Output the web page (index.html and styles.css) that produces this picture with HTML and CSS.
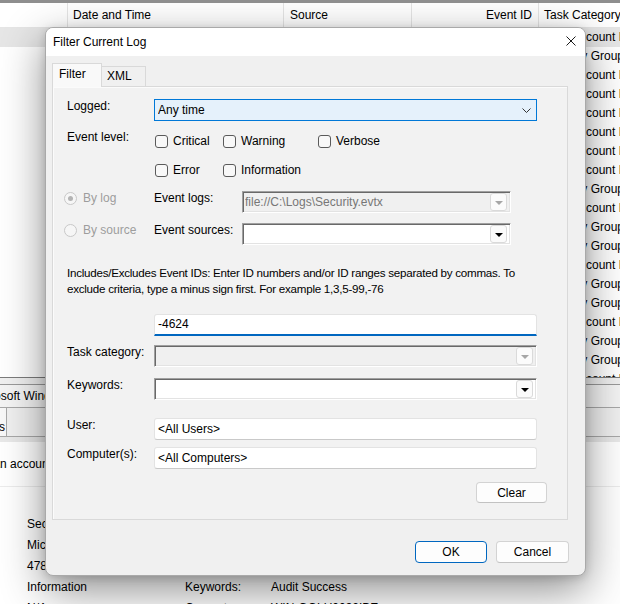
FILE: index.html
```html
<!DOCTYPE html>
<html lang="en">
<head>
<meta charset="utf-8">
<title>Filter Current Log</title>
<link rel="stylesheet" href="styles.css">
</head>
<body>
<div class="viewer">
  <div class="list-head">
    <div class="cell w-level"></div>
    <div class="cell w-date">Date and Time</div>
    <div class="cell w-source">Source</div>
    <div class="cell w-id">Event ID</div>
    <div class="cell w-task">Task Category</div>
  </div>
  <div class="list">
    <div class="row selected"><div class="w-level"></div><div class="w-date">3/14/2024 9:12:05 AM</div><div class="w-source">Microsoft Windows security</div><div class="w-id">4738</div><div class="w-task">User Account Management</div></div>
    <div class="row"><div class="w-level"></div><div class="w-date">3/14/2024 9:12:05 AM</div><div class="w-source">Microsoft Windows security</div><div class="w-id">4799</div><div class="w-task">Security Group Management</div></div>
    <div class="row"><div class="w-level"></div><div class="w-date">3/14/2024 9:12:04 AM</div><div class="w-source">Microsoft Windows security</div><div class="w-id">4738</div><div class="w-task">User Account Management</div></div>
    <div class="row"><div class="w-level"></div><div class="w-date">3/14/2024 9:12:04 AM</div><div class="w-source">Microsoft Windows security</div><div class="w-id">4722</div><div class="w-task">User Account Management</div></div>
    <div class="row"><div class="w-level"></div><div class="w-date">3/14/2024 9:12:04 AM</div><div class="w-source">Microsoft Windows security</div><div class="w-id">4738</div><div class="w-task">User Account Management</div></div>
    <div class="row"><div class="w-level"></div><div class="w-date">3/14/2024 9:12:04 AM</div><div class="w-source">Microsoft Windows security</div><div class="w-id">4724</div><div class="w-task">User Account Management</div></div>
    <div class="row"><div class="w-level"></div><div class="w-date">3/14/2024 9:12:04 AM</div><div class="w-source">Microsoft Windows security</div><div class="w-id">4738</div><div class="w-task">User Account Management</div></div>
    <div class="row"><div class="w-level"></div><div class="w-date">3/14/2024 9:12:04 AM</div><div class="w-source">Microsoft Windows security</div><div class="w-id">4720</div><div class="w-task">User Account Management</div></div>
    <div class="row"><div class="w-level"></div><div class="w-date">3/14/2024 9:12:03 AM</div><div class="w-source">Microsoft Windows security</div><div class="w-id">4732</div><div class="w-task">Security Group Management</div></div>
    <div class="row"><div class="w-level"></div><div class="w-date">3/14/2024 9:12:03 AM</div><div class="w-source">Microsoft Windows security</div><div class="w-id">4781</div><div class="w-task">User Account Management</div></div>
    <div class="row"><div class="w-level"></div><div class="w-date">3/14/2024 9:12:03 AM</div><div class="w-source">Microsoft Windows security</div><div class="w-id">4798</div><div class="w-task">Security Group Management</div></div>
    <div class="row"><div class="w-level"></div><div class="w-date">3/14/2024 9:12:03 AM</div><div class="w-source">Microsoft Windows security</div><div class="w-id">4799</div><div class="w-task">Security Group Management</div></div>
    <div class="row"><div class="w-level"></div><div class="w-date">3/14/2024 9:12:02 AM</div><div class="w-source">Microsoft Windows security</div><div class="w-id">4738</div><div class="w-task">User Account Management</div></div>
    <div class="row"><div class="w-level"></div><div class="w-date">3/14/2024 9:12:02 AM</div><div class="w-source">Microsoft Windows security</div><div class="w-id">4732</div><div class="w-task">Security Group Management</div></div>
    <div class="row"><div class="w-level"></div><div class="w-date">3/14/2024 9:12:02 AM</div><div class="w-source">Microsoft Windows security</div><div class="w-id">4799</div><div class="w-task">Security Group Management</div></div>
    <div class="row"><div class="w-level"></div><div class="w-date">3/14/2024 9:12:02 AM</div><div class="w-source">Microsoft Windows security</div><div class="w-id">4720</div><div class="w-task">User Account Management</div></div>
    <div class="row"><div class="w-level"></div><div class="w-date">3/14/2024 9:12:01 AM</div><div class="w-source">Microsoft Windows security</div><div class="w-id">4798</div><div class="w-task">Security Group Management</div></div>
    <div class="row"><div class="w-level"></div><div class="w-date">3/14/2024 9:12:01 AM</div><div class="w-source">Microsoft Windows security</div><div class="w-id">4799</div><div class="w-task">Security Group Management</div></div>
    <div class="row"><div class="w-level"></div><div class="w-date">3/14/2024 9:12:01 AM</div><div class="w-source">Microsoft Windows security</div><div class="w-id">4738</div><div class="w-task">User Account Management</div></div>
  </div>
  <div class="details">
    <div class="details-title"><span class="shift-title">Event 4781, Microsoft Windows security auditing.</span></div>
    <div class="details-tabs"><span class="dtab">Details</span></div>
    <div class="details-desc"><span class="shift-desc">An account was successfully logged on.</span></div>
    <div class="fields">
      <span>Security</span><span>Logged:</span><span>3/14/2024 9:12:05 AM</span>
      <span>Microsoft Windows security auditing.</span><span>Task Category:</span><span>User Account Management</span>
      <span>4781</span><span>Level:</span><span>Information</span>
      <span>Information</span><span>Keywords:</span><span>Audit Success</span>
      <span>N/A</span><span>Computer:</span><span>WIN-GOLU0032IBE</span>
    </div>
  </div>

  <div class="dialog">
    <div class="titlebar">
      <span class="title">Filter Current Log</span>
      <svg class="close" width="10" height="10" viewBox="0 0 10 10"><path d="M0.5 0.5L9.5 9.5M9.5 0.5L0.5 9.5" stroke="#1a1a1a" stroke-width="1" fill="none"/></svg>
    </div>
    <div class="dlg-body">
      <div class="tabs">
        <div class="tab active">Filter</div>
        <div class="tab">XML</div>
      </div>
      <div class="panel">
        <div class="frow r-logged">
          <div class="flabel">Logged:</div>
          <div class="select">
            <span class="val">Any time</span>
            <svg class="chev" width="9" height="5" viewBox="0 0 9 5"><path d="M0.5 0.5L4.5 4.5L8.5 0.5" stroke="#333" stroke-width="1" fill="none"/></svg>
          </div>
        </div>
        <div class="frow r-level">
          <div class="flabel">Event level:</div>
          <div class="checks">
            <div class="check w1"><span class="box"></span>Critical</div>
            <div class="check w2"><span class="box"></span>Warning</div>
            <div class="check"><span class="box"></span>Verbose</div>
          </div>
        </div>
        <div class="frow r-level2">
          <div class="flabel"></div>
          <div class="checks">
            <div class="check w1"><span class="box"></span>Error</div>
            <div class="check w2"><span class="box"></span>Information</div>
          </div>
        </div>
        <div class="frow r-log">
          <div class="radio on"><span class="dot"></span>By log</div>
          <div class="flabel2">Event logs:</div>
          <div class="combo off">
            <span class="val">file://C:\Logs\Security.evtx</span>
            <span class="drop"><i></i></span>
          </div>
        </div>
        <div class="frow r-src">
          <div class="radio"><span class="dot"></span>By source</div>
          <div class="flabel2">Event sources:</div>
          <div class="combo">
            <span class="val"></span>
            <span class="drop"><i></i></span>
          </div>
        </div>
        <p class="hint">Includes/Excludes Event IDs: Enter ID numbers and/or ID ranges separated by commas. To<br>exclude criteria, type a minus sign first. For example 1,3,5-99,-76</p>
        <div class="frow r-ids">
          <div class="flabel"></div>
          <div class="text focus">-4624</div>
        </div>
        <div class="frow r-task">
          <div class="flabel">Task category:</div>
          <div class="combo wide off">
            <span class="val"></span>
            <span class="drop"><i></i></span>
          </div>
        </div>
        <div class="frow r-kw">
          <div class="flabel">Keywords:</div>
          <div class="combo wide">
            <span class="val"></span>
            <span class="drop"><i></i></span>
          </div>
        </div>
        <div class="frow r-user">
          <div class="flabel">User:</div>
          <div class="text">&lt;All Users&gt;</div>
        </div>
        <div class="frow r-comp">
          <div class="flabel">Computer(s):</div>
          <div class="text">&lt;All Computers&gt;</div>
        </div>
        <div class="panel-foot">
          <button class="btn clear">Clear</button>
        </div>
      </div>
      <div class="dlg-foot">
        <button class="btn default">OK</button>
        <button class="btn">Cancel</button>
      </div>
    </div>
  </div>
</div>
</body>
</html>
```

FILE: styles.css
```css
body{margin:0;padding:0;background:#fff;overflow:hidden;
  font-family:"Liberation Sans",Arial,sans-serif;font-size:12px;color:#000;}
p{margin:0;}

.viewer{
  width:620px;
  height:604px;
  position:relative;
  overflow:hidden;
  box-sizing:border-box;
  border-top:3px solid #8e8e8e;
  background:#fff;
}

/* event list behind the dialog */
.list-head{
  display:flex;
  height:24px;
  border-bottom:1px solid #e5e5e5;
  background:#fff;
}
.list-head .cell{
  box-sizing:border-box;
  line-height:24px;
  border-right:1px solid #e5e5e5;
  white-space:nowrap;
}
.w-level{width:68px;flex:none;}
.w-date{width:216px;flex:none;padding-left:5px;box-sizing:border-box;}
.w-source{width:128px;flex:none;padding-left:6px;box-sizing:border-box;}
.w-id{width:127px;flex:none;padding-right:6px;text-align:right;box-sizing:border-box;}
.w-task{flex:1;padding-left:5px;white-space:nowrap;}
.list-head .w-task{border-right:none;}

.list{
  height:349px;
  overflow:hidden;
  border-bottom:1px solid #7c7c7c;
}
.row{
  display:flex;
  height:19px;
  line-height:19px;
  white-space:nowrap;
  overflow:hidden;
}
.row > div{overflow:hidden;}
.row.selected{background:#e6e6e6;}

/* lower preview pane */
.details{
  border-top:6px solid #f0f0f0;
  background:#fff;
}
.details-title{
  height:22px;
  line-height:22px;
  background:#f4f4f4;
  border-top:1px solid #9a9a9a;
  border-bottom:1px solid #a8a8a8;
  white-space:nowrap;
  overflow:hidden;
}
.shift-title{margin-left:-96px;}
.details-tabs{
  height:28px;
  background:#f0f0f0;
  border-bottom:1px solid #a8a8a8;
  white-space:nowrap;
  overflow:hidden;
}
.dtab{
  display:inline-block;
  box-sizing:border-box;
  width:48px;
  margin-left:-41px;
  height:28px;
  padding:12px 1px 0 0;
  text-align:right;
  background:#f8f8f8;
  border-right:1px solid #a8a8a8;
}
.details-desc{
  box-sizing:border-box;
  height:50px;
  border-top:5px solid #e9e9e9;
  border-bottom:1px solid #ececec;
  padding-top:15px;
  white-space:nowrap;
  overflow:hidden;
}
.shift-desc{margin-left:-8px;}
.fields{
  display:grid;
  grid-template-columns:158px 86px auto;
  grid-auto-rows:21px;
  line-height:21px;
  padding:27px 0 0 27px;
  white-space:nowrap;
}

/* the dialog */
.dialog{
  position:absolute;
  left:45px;
  top:24px;
  width:541px;
  height:549px;
  box-sizing:border-box;
  background:#f0f0f0;
  border:1px solid #a9a9a9;
  border-radius:8px;
  overflow:hidden;
  box-shadow:0 14px 44px rgba(0,0,0,0.45),0 2px 8px rgba(0,0,0,0.15);
}
.titlebar{
  height:28px;
  background:#fff;
  display:flex;
  align-items:center;
  padding-left:7px;
}
.title{flex:1;}
.close{margin-right:9px;margin-top:-2px;}

.dlg-body{padding:7px 0 0 6px;}
.tabs{
  display:flex;
  align-items:flex-end;
  height:23px;
}
.tab{
  box-sizing:border-box;
  height:20px;
  line-height:19px;
  padding-left:5px;
  width:44px;
  border:1px solid #d9d9d9;
  border-bottom:none;
  background:#f0f0f0;
}
.tab.active{
  width:50px;
  height:24px;
  line-height:21px;
  padding-left:6px;
  margin-bottom:-1px;
  background:#f9f9f9;
  position:relative;
  z-index:1;
}
.tab + .tab{border-left:none;}

.panel{
  box-sizing:border-box;
  width:516px;
  height:434px;
  border:1px solid #d9d9d9;
  box-shadow:inset 1px 1px 0 #fbfbfb;
  background:#f2f2f2;
  padding:12px 0 0 14px;
}
.frow{
  display:flex;
  align-items:center;
  height:22px;
}
.flabel{
  width:87px;
  flex:none;
  align-self:flex-start;
  line-height:14px;
}
.flabel2{
  width:88px;
  flex:none;
  align-self:flex-start;
  line-height:14px;
}
.r-level{margin-top:9px;}
.r-level2{margin-top:7px;}
.r-log{margin-top:10px;}
.r-src{margin-top:10px;}
.hint{margin-top:20px;line-height:16px;font-size:11.6px;letter-spacing:-0.25px;}
.r-ids{margin-top:17px;}
.r-task{margin-top:9px;}
.r-kw{margin-top:11px;}
.r-user{margin-top:18px;}
.r-comp{margin-top:7px;}

.select{
  box-sizing:border-box;
  width:383px;
  height:22px;
  display:flex;
  align-items:center;
  padding:0 5px 0 3px;
  background:#e5f1fb;
  border:1px solid #0078d7;
}
.val{flex:1;white-space:nowrap;overflow:hidden;}

.checks{display:flex;padding-left:1px;}
.check{display:flex;align-items:center;}
.check.w1{width:68px;}
.check.w2{width:95px;}
.box{
  box-sizing:border-box;
  width:13px;
  height:13px;
  border:1px solid #5a5a5a;
  border-radius:3px;
  background:#f8f8f8;
  margin-right:5px;
}

.radio{
  width:90px;
  margin-left:-3px;
  flex:none;
  align-self:flex-start;
  display:flex;
  align-items:center;
  height:14px;
  color:#9d9d9d;
}
.dot{
  box-sizing:border-box;
  width:13px;
  height:13px;
  border:1px solid #c8c8c8;
  border-radius:50%;
  background:#f6f6f6;
  margin-right:6px;
  display:flex;
  align-items:center;
  justify-content:center;
}
.radio.on .dot::after{
  content:"";
  width:5px;
  height:5px;
  border-radius:50%;
  background:#b4b4b4;
}

.combo{
  box-sizing:border-box;
  width:269px;
  height:22px;
  display:flex;
  align-items:center;
  padding:0 3px 0 2px;
  background:#fff;
  border-top:1px solid #a0a0a0;
  border-left:1px solid #a0a0a0;
  border-right:1px solid #fff;
  border-bottom:1px solid #fff;
  box-shadow:inset 1px 1px 0 #696969,inset -1px -1px 0 #e3e3e3;
}
.combo.wide{width:383px;}
.combo.off{background:#f0f0f0;color:#777;}
.drop{
  box-sizing:border-box;
  width:17px;
  height:18px;
  border:1px solid #dadada;
  border-radius:3px;
  background:#fbfbfb;
  display:flex;
  align-items:center;
  justify-content:center;
}
.drop i{
  width:0;
  height:0;
  margin-top:1px;
  border-left:4px solid transparent;
  border-right:4px solid transparent;
  border-top:4px solid #000;
}
.combo.off .drop i{border-top-color:#a6a6a6;}

.text{
  box-sizing:border-box;
  width:383px;
  height:22px;
  line-height:20px;
  padding-left:3px;
  background:#fff;
  border:1px solid #e3e3e3;
  border-bottom-color:#c9c9c9;
  border-radius:3px;
}
.text.focus{
  border-bottom:2px solid #0067c0;
  border-radius:3px 3px 0 0;
  line-height:19px;
}

.panel-foot{
  display:flex;
  justify-content:flex-end;
  margin-top:13px;
  padding-right:20px;
}
.btn{
  box-sizing:border-box;
  height:22px;
  width:73px;
  margin:0;
  padding:0;
  font-family:"Liberation Sans",Arial,sans-serif;
  font-size:12px;
  color:#000;
  background:#fdfdfd;
  border:1px solid #d3d3d3;
  border-bottom-color:#c2c2c2;
  border-radius:4px;
}
.btn.clear{width:71px;height:21px;}
.btn.default{width:72px;border-color:#0067c0;}
.dlg-foot{
  display:flex;
  justify-content:flex-end;
  gap:9px;
  margin-top:21px;
  padding-right:16px;
}
```
